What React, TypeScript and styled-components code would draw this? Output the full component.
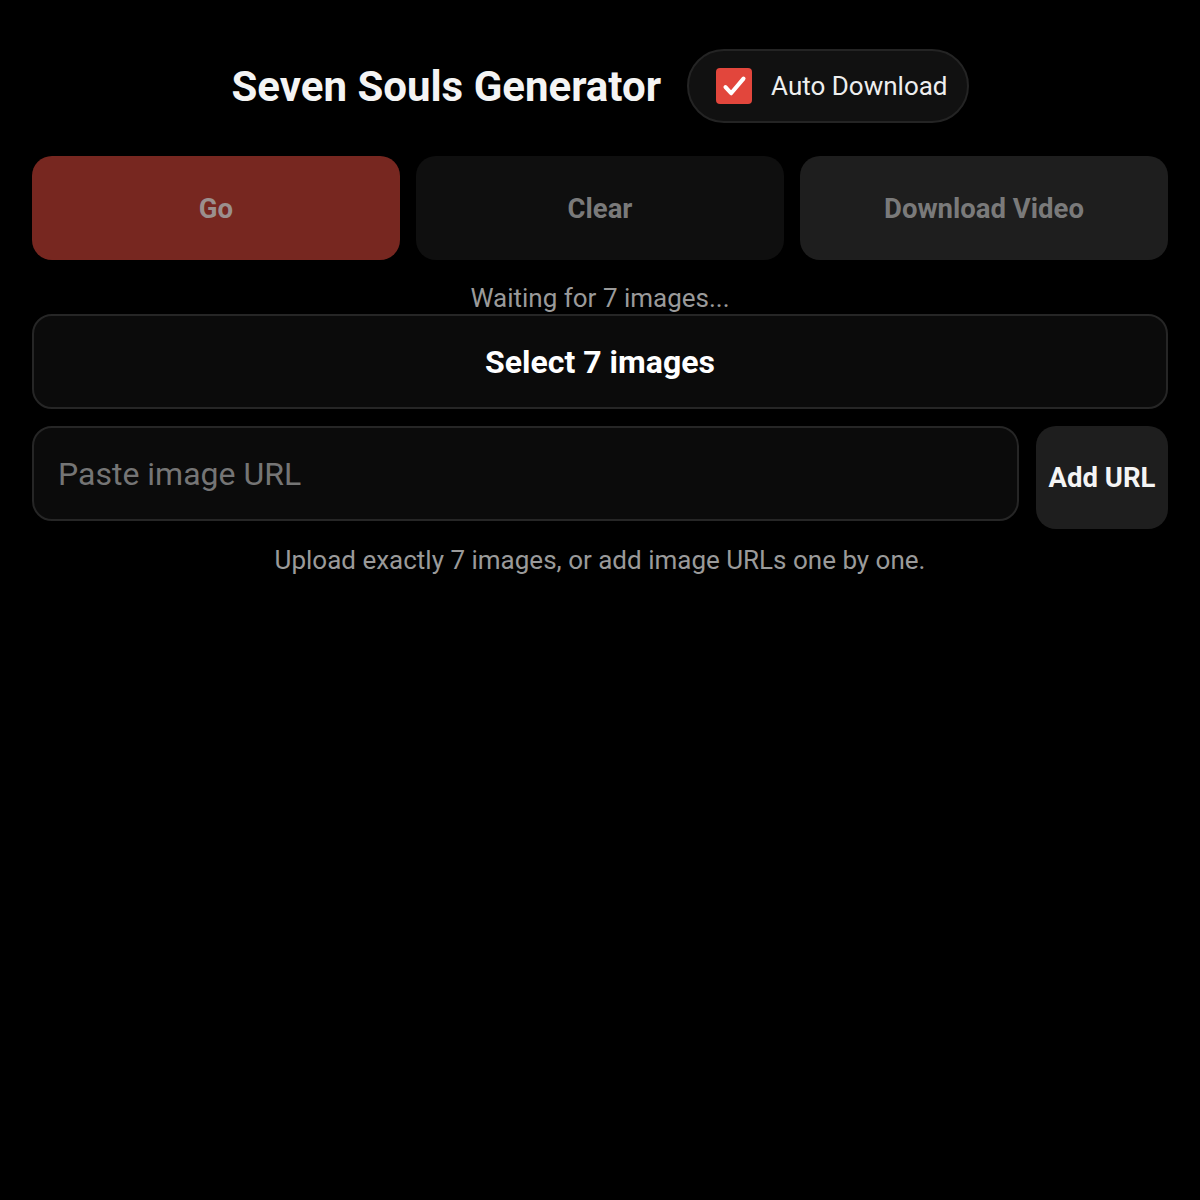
import React, { FC, useState } from 'react'
import styled, { createGlobalStyle } from 'styled-components'

const GlobalStyle = createGlobalStyle`
  html, body {
    margin: 0;
    padding: 0;
    background: #000;
    font-family: Roboto, "Liberation Sans", sans-serif;
  }
`

const App: FC = () => {
  const [autoDownload, setAutoDownload] = useState(true)
  const [url, setUrl] = useState('')

  return (
    <Page>
      <GlobalStyle />
      <Header>
        <Title>Seven Souls Generator</Title>
        <Toggle>
          <Check checked={autoDownload} onClick={() => setAutoDownload(!autoDownload)}>
            {autoDownload && (
              <svg width="27" height="27" viewBox="0 0 24 24" fill="none">
                <path d="M4 12.5l5 5.5L20 5" stroke="#fff" strokeWidth="3.6" strokeLinecap="round" strokeLinejoin="round" />
              </svg>
            )}
          </Check>
          <ToggleLabel>Auto Download</ToggleLabel>
        </Toggle>
      </Header>

      <ActionRow>
        <ActionButton variant="go">Go</ActionButton>
        <ActionButton variant="clear">Clear</ActionButton>
        <ActionButton variant="download">Download Video</ActionButton>
      </ActionRow>

      <Status>Waiting for 7 images...</Status>
      <SelectBox>Select 7 images</SelectBox>

      <UrlRow>
        <UrlInput
          value={url}
          onChange={(e) => setUrl(e.target.value)}
          placeholder="Paste image URL"
        />
        <AddButton>Add URL</AddButton>
      </UrlRow>

      <Hint>Upload exactly 7 images, or add image URLs one by one.</Hint>
    </Page>
  )
}

export default App

const Page = styled.div`
  padding: 49px 32px;
  display: flex;
  flex-direction: column;
  color: #fff;
`

const Header = styled.div`
  display: flex;
  align-items: center;
  justify-content: center;
  gap: 26px;
`

const Title = styled.h1`
  margin: 0;
  font-size: 42px;
  font-weight: 700;
  color: #f4f4f4;
`

const Toggle = styled.label`
  display: flex;
  align-items: center;
  gap: 19px;
  height: 74px;
  padding: 0 19px 0 27px;
  box-sizing: border-box;
  border-radius: 37px;
  background: #111;
  border: 2px solid #242424;
`

const Check = styled.span<{ checked: boolean }>`
  width: 36px;
  height: 36px;
  border-radius: 4px;
  background: ${(p) => (p.checked ? '#e2463c' : 'transparent')};
  border: ${(p) => (p.checked ? 'none' : '2px solid #777')};
  display: flex;
  align-items: center;
  justify-content: center;
  cursor: pointer;
`

const ToggleLabel = styled.span`
  font-size: 26px;
  color: #eee;
`

const ActionRow = styled.div`
  display: grid;
  grid-template-columns: repeat(3, 1fr);
  gap: 16px;
  margin-top: 33px;
`

const variantBg: Record<string, string> = {
  go: '#772720',
  clear: '#0f0f0f',
  download: '#1e1e1e',
}

const ActionButton = styled.button<{ variant: 'go' | 'clear' | 'download' }>`
  height: 104px;
  border: none;
  border-radius: 20px;
  background: ${(p) => variantBg[p.variant]};
  color: ${(p) => (p.variant === 'go' ? '#9b8f8d' : '#7a7a7a')};
  font-family: Roboto, "Liberation Sans", sans-serif;
  font-size: 27.5px;
  font-weight: 700;
`

const Status = styled.div`
  margin-top: 24px;
  text-align: center;
  font-size: 26px;
  line-height: 28px;
  color: #9a9a9a;
`

const SelectBox = styled.div`
  margin-top: 2px;
  height: 95px;
  box-sizing: border-box;
  border: 2px solid #262626;
  border-radius: 20px;
  background: #0b0b0b;
  display: flex;
  align-items: center;
  justify-content: center;
  font-size: 32px;
  font-weight: 700;
  color: #fff;
`

const UrlRow = styled.div`
  display: flex;
  align-items: flex-start;
  gap: 17px;
  margin-top: 17px;
`

const UrlInput = styled.input`
  flex: 1;
  height: 95px;
  box-sizing: border-box;
  border: 2px solid #262626;
  border-radius: 20px;
  background: #0b0b0b;
  padding: 0 24px;
  font-family: Roboto, "Liberation Sans", sans-serif;
  font-size: 32px;
  color: #fff;
  outline: none;

  &::placeholder {
    color: #757575;
  }
`

const AddButton = styled.button`
  width: 132px;
  height: 103px;
  border: none;
  border-radius: 20px;
  background: #1e1e1e;
  color: #f4f4f4;
  font-family: Roboto, "Liberation Sans", sans-serif;
  font-size: 27.5px;
  font-weight: 700;
  padding: 0;
`

const Hint = styled.div`
  margin-top: 16px;
  text-align: center;
  font-size: 26px;
  color: #9a9a9a;
`
